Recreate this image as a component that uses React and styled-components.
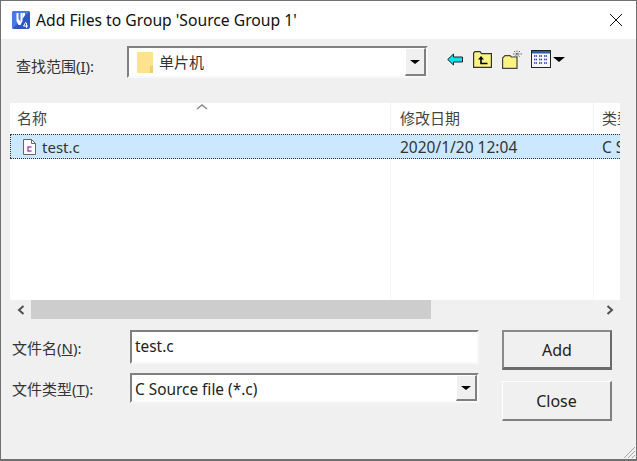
import React from "react"
import styled, { createGlobalStyle } from "styled-components"

const GlobalStyle = createGlobalStyle`
  html, body { margin: 0; padding: 0; background: #f0f0f0; }
  body { font-family: "Noto Sans", "Noto Sans CJK SC", sans-serif; color: #1a1a1a; }
  * { box-sizing: border-box; }
`

const Dialog = styled.div`
  position: relative;
  width: 637px;
  height: 461px;
  border: 1px solid #707070;
  border-bottom-width: 2px;
  background: #f0f0f0;
  overflow: hidden;
  display: flex;
  flex-direction: column;
`

const TitleBar = styled.div`
  height: 38px;
  flex: none;
  background: #fff;
  display: flex;
  align-items: center;
  padding: 0 13px 0 11px;
  gap: 6px;
`

const TitleText = styled.div`
  flex: 1;
  font-size: 15.7px;
  white-space: nowrap;
  color: #111;
`

const LookRow = styled.div`
  height: 64px;
  flex: none;
  display: flex;
  align-items: flex-start;
  padding: 7px 0 0 15px;
`

const LookLabel = styled.label`
  width: 111px;
  font-size: 15px;
  line-height: 20px;
  margin-top: 10px;
  white-space: nowrap;
  color: #333;
`

const Underline = styled.span`
  text-decoration: underline;
`

const Sunken = styled.div`
  display: flex;
  align-items: center;
  width: ${(p) => p.$width}px;
  height: ${(p) => p.$height}px;
  background: #fff;
  border-style: solid;
  border-width: 2px;
  border-color: #808080 #f8f8f8 #f8f8f8 #808080;
  color: #222;
`

const FolderName = styled.span`
  flex: 1;
  margin-left: 6px;
  padding-bottom: 2px;
  font-size: 15px;
  color: #333;
`

const FolderSlot = styled.span`
  display: flex;
  margin-left: 8px;
`

const DropButton = styled.div`
  flex: none;
  width: 21px;
  height: 100%;
  background: #f0f0f0;
  display: flex;
  align-items: center;
  justify-content: center;
  border-style: solid;
  border-width: 1px 2px 2px 1px;
  border-color: #fff #808080 #808080 #fff;
`

const Caret = styled.span`
  width: 0;
  height: 0;
  border-left: ${(p) => p.$size}px solid transparent;
  border-right: ${(p) => p.$size}px solid transparent;
  border-top: ${(p) => p.$size - 1}px solid #000;
`

const ToolIcons = styled.div`
  display: flex;
  align-items: center;
  margin: 1px 0 0 19px;
  height: 24px;
  gap: 10px;
`

const ViewMenu = styled.div`
  display: flex;
  align-items: center;
  gap: 2px;
  margin-left: -1px;
`

const FileList = styled.div`
  margin-left: 9px;
  width: 610px;
  height: 197px;
  flex: none;
  background: #fff;
  display: flex;
  flex-direction: column;
  position: relative;
`

const HeaderRow = styled.div`
  height: 30px;
  flex: none;
  display: grid;
  grid-template-columns: 381px 203px 26px;
  font-size: 15px;
  color: #444;
  overflow: hidden;
`

const HeaderCell = styled.div`
  padding: 4px 0 0 ${(p) => p.$pad}px;
  white-space: nowrap;
  overflow: hidden;
  border-right: 1px solid #eef3f9;
  &:last-child { border-right: none; }
`

const SortArrow = styled.svg`
  position: absolute;
  left: 186px;
  top: 0;
`

const FileRow = styled.div`
  height: 25px;
  margin-top: 1px;
  flex: none;
  display: grid;
  grid-template-columns: 381px 203px 26px;
  align-items: center;
  background: #cce8ff;
  border-top: 1px dotted #333;
  border-bottom: 1px dotted #333;
  color: #333;
  overflow: hidden;
`

const FileName = styled.div`
  display: flex;
  align-items: center;
  gap: 6px;
  padding-left: 12px;
  border-left: 1px dotted #333;
  height: 100%;
  font-size: 15px;
`

const RowCell = styled.div`
  padding-left: ${(p) => p.$pad}px;
  white-space: nowrap;
  overflow: hidden;
  font-size: 15.5px;
`

const ColumnGuides = styled.div`
  flex: 1;
  display: grid;
  grid-template-columns: 381px 203px 26px;
`

const Guide = styled.div`
  border-right: 1px solid #f3f7fb;
  &:last-child { border-right: none; }
`

const ScrollBar = styled.div`
  margin-left: 9px;
  width: 610px;
  height: 19px;
  flex: none;
  display: flex;
  align-items: stretch;
  background: #f0f0f0;
`

const ScrollEnd = styled.div`
  width: 21px;
  flex: none;
  display: flex;
  align-items: center;
  justify-content: center;
`

const ScrollThumb = styled.div`
  width: 400px;
  background: #cdcdcd;
`

const ScrollGap = styled.div`
  flex: 1;
`

const Bottom = styled.div`
  display: grid;
  grid-template-columns: 118px 349px 110px;
  padding: 11px 0 0 11px;
`

const Fields = styled.div`
  grid-column: 1 / 3;
  display: flex;
  flex-direction: column;
  gap: 9px;
`

const FieldRow = styled.div`
  display: flex;
  align-items: center;
`

const FieldLabel = styled.label`
  width: 118px;
  font-size: 15px;
  white-space: nowrap;
  color: #333;
`

const FieldText = styled.span`
  flex: 1;
  padding-left: 3px;
  font-size: 15.4px;
  white-space: nowrap;
  position: relative;
  top: ${(p) => p.$shift}px;
`

const Buttons = styled.div`
  display: flex;
  flex-direction: column;
  gap: 11px;
  margin-left: 23px;
  width: 110px;
`

const DialogButton = styled.button`
  height: 40px;
  width: 110px;
  padding: 0;
  font-family: inherit;
  font-size: 16px;
  color: #222;
  background: #f0f0f0;
  border-style: solid;
  border-width: ${(p) => (p.$primary ? "2px 2px 3px 2px" : "1px 2px 2px 1px")};
  border-color: ${(p) =>
    p.$primary ? "#8a8a8a #6a6a6a #6a6a6a #8a8a8a" : "#fff #808080 #808080 #fff"};
`

const Grip = styled.svg`
  position: absolute;
  right: 0;
  bottom: 0;
`

const CloseIcon = () => (
  <svg width="14" height="14" viewBox="0 0 14 14">
    <path d="M1 1 L13 13 M13 1 L1 13" stroke="#111" strokeWidth="1" fill="none" />
  </svg>
)

const Logo = () => (
  <svg width="18" height="18" viewBox="0 0 18 18">
    <rect width="18" height="18" rx="2" fill="#2f55c8" />
    <path d="M0 2 Q0 0 2 0 H18 L0 18 Z" fill="#4a78e6" />
    <path d="M4.5 2 H6.5 V8 L8.5 10.5 V2 H10.5 V10 L8.5 14 L6.5 14 L4.5 10 Z" fill="#fff" />
    <path d="M10.5 2 H13 V4 L10.5 8 Z" fill="#fff" />
    <path d="M14 11 L11.5 15 H16 M14.5 12 V17" stroke="#fff" strokeWidth="1" fill="none" />
  </svg>
)

const FolderIcon = () => (
  <svg width="16" height="21" viewBox="0 0 16 21">
    <path d="M0 1 Q0 0 1 0 H15 Q16 0 16 1 V20 Q16 21 15 21 H1 Q0 21 0 20 Z" fill="#fde28f" />
    <path d="M13 14 H16 V21 H13 Z" fill="#f3cd6c" />
  </svg>
)

const BackIcon = () => (
  <svg width="16" height="13" viewBox="0 0 16 13">
    <path d="M0.7 6.5 L6.5 1 V4 H15.5 V9 H6.5 V12 Z" fill="#00e4ee" stroke="#222" strokeWidth="1" />
  </svg>
)

const UpFolderIcon = () => (
  <svg width="19" height="17" viewBox="0 0 19 17">
    <path d="M.6 16.4 V2 L2 .6 H7 L8.6 2.6 H18.4 V16.4 Z" fill="#fbf483" stroke="#333" strokeWidth="1.2" />
    <path d="M5 8.5 H11 L8 5 Z" fill="#000" />
    <path d="M8 8 V12.5 H14.5" stroke="#000" strokeWidth="1.6" fill="none" />
  </svg>
)

const NewFolderIcon = () => (
  <svg width="20" height="19" viewBox="0 0 20 19">
    <path d="M.6 18.4 V8 L3 5.6 H8 L9.5 7 H15 V18.4 Z" fill="#fbf483" stroke="#444" strokeWidth="1.2" />
    <path d="M15 .5 V8 M11 4 H20 M12 1 L18 7 M18 1 L12 7" stroke="#666" strokeWidth="1" strokeDasharray="1.5 1" />
  </svg>
)

const ViewIcon = () => (
  <svg width="20" height="18" viewBox="0 0 20 18">
    <rect x="0.5" y="0.5" width="19" height="17" fill="#f4f6fb" stroke="#222" />
    <rect x="1" y="1" width="18" height="2.5" fill="#2a5ea8" />
    <path d="M3 6 H6 M8 6 H11 M13 6 H16 M3 9.5 H6 M8 9.5 H11 M13 9.5 H16 M3 13 H6 M8 13 H11 M13 13 H16" stroke="#2a3aa8" strokeWidth="1.6" strokeDasharray="1.5 .5" />
  </svg>
)

const FileIcon = () => (
  <svg width="13" height="16" viewBox="0 0 13 16">
    <path d="M.5 .5 H8.5 L12.5 4.5 V15.5 H.5 Z" fill="#fdfdfd" stroke="#666" />
    <path d="M8.5 .5 V4.5 H12.5" fill="none" stroke="#666" />
    <path d="M8.5 8 H5 V12 H8.5" fill="none" stroke="#a04cb0" strokeWidth="1.4" />
  </svg>
)

const Chevron = ({ right }) => (
  <svg width="8" height="10" viewBox="0 0 8 10">
    <path d={right ? "M1.5 1 L6 5 L1.5 9" : "M6.5 1 L2 5 L6.5 9"} stroke="#505050" strokeWidth="2" fill="none" />
  </svg>
)

const App = () => {
  return (
    <>
      <GlobalStyle />
      <Dialog>
        <TitleBar>
          <Logo />
          <TitleText>Add Files to Group 'Source Group 1'</TitleText>
          <CloseIcon />
        </TitleBar>
        <LookRow>
          <LookLabel>
            查找范围(<Underline>I</Underline>):
          </LookLabel>
          <Sunken $width={301} $height={32}>
            <FolderSlot>
              <FolderIcon />
            </FolderSlot>
            <FolderName>单片机</FolderName>
            <DropButton>
              <Caret $size={5} />
            </DropButton>
          </Sunken>
          <ToolIcons>
            <BackIcon />
            <UpFolderIcon />
            <NewFolderIcon />
            <ViewMenu>
              <ViewIcon />
              <Caret $size={6} />
            </ViewMenu>
          </ToolIcons>
        </LookRow>
        <FileList>
          <SortArrow width="12" height="8" viewBox="0 0 12 8">
            <path d="M1 6 L6 2 L11 6" stroke="#888" strokeWidth="1.4" fill="none" />
          </SortArrow>
          <HeaderRow>
            <HeaderCell $pad={7}>名称</HeaderCell>
            <HeaderCell $pad={9}>修改日期</HeaderCell>
            <HeaderCell $pad={8}>类型</HeaderCell>
          </HeaderRow>
          <FileRow>
            <FileName>
              <FileIcon />
              test.c
            </FileName>
            <RowCell $pad={9}>2020/1/20 12:04</RowCell>
            <RowCell $pad={8}>C Source</RowCell>
          </FileRow>
          <ColumnGuides>
            <Guide />
            <Guide />
            <Guide />
          </ColumnGuides>
        </FileList>
        <ScrollBar>
          <ScrollEnd>
            <Chevron />
          </ScrollEnd>
          <ScrollThumb />
          <ScrollGap />
          <ScrollEnd>
            <Chevron right />
          </ScrollEnd>
        </ScrollBar>
        <Bottom>
          <Fields>
            <FieldRow>
              <FieldLabel>
                文件名(<Underline>N</Underline>):
              </FieldLabel>
              <Sunken $width={349} $height={34}>
                <FieldText $shift={-1}>test.c</FieldText>
              </Sunken>
            </FieldRow>
            <FieldRow>
              <FieldLabel>
                文件类型(<Underline>T</Underline>):
              </FieldLabel>
              <Sunken $width={349} $height={30}>
                <FieldText $shift={1}>C Source file (*.c)</FieldText>
                <DropButton>
                  <Caret $size={5} />
                </DropButton>
              </Sunken>
            </FieldRow>
          </Fields>
          <Buttons>
            <DialogButton $primary>Add</DialogButton>
            <DialogButton>Close</DialogButton>
          </Buttons>
        </Bottom>
        <Grip width="15" height="15" viewBox="0 0 15 15">
          <path d="M14 3 L3 14 M14 7 L7 14 M14 11 L11 14" stroke="#a8a8a8" strokeWidth="1" fill="none" />
        </Grip>
      </Dialog>
    </>
  )
}

export default App
